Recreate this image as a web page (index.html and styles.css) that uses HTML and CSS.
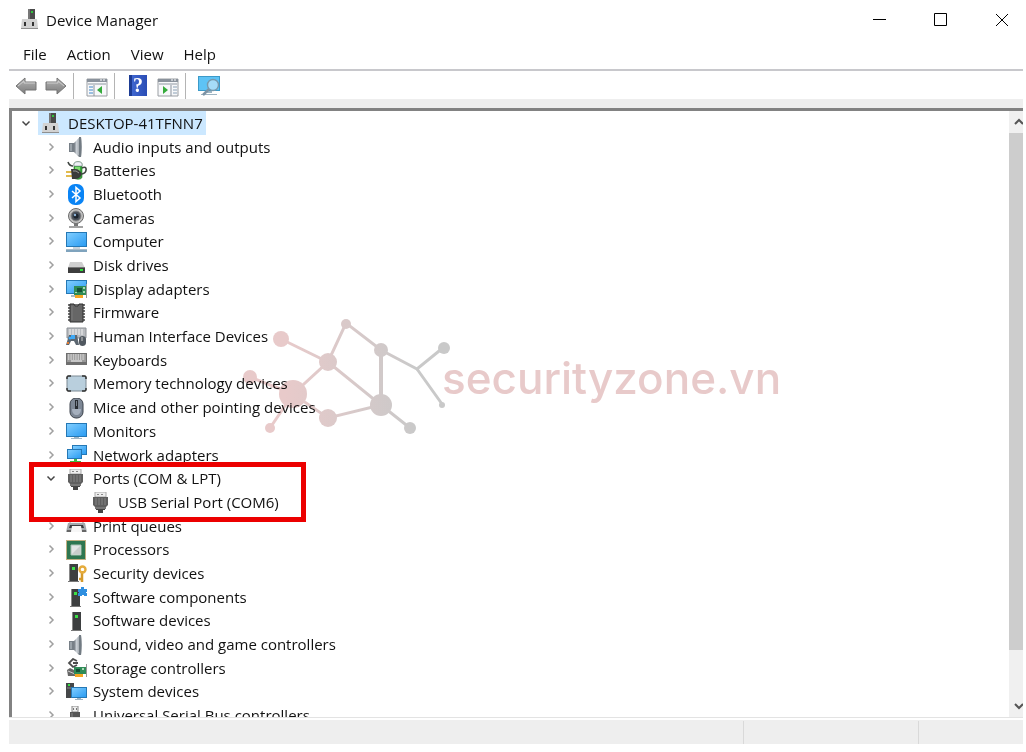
FILE: index.html
```html
<!DOCTYPE html>
<html lang="en">
<head>
    <meta charset="UTF-8">
    <title>Device Manager</title>
    <link rel="stylesheet" href="styles.css">
</head>
<body>

<!-- icon set, all drawn on a 21x21 grid -->
<svg class="sprite" aria-hidden="true">
    <defs>
        <linearGradient id="g-screen" x1="0" y1="0" x2="1" y2="1">
            <stop offset="0" stop-color="#7fcdff"/>
            <stop offset="1" stop-color="#2b9cf2"/>
        </linearGradient>
        <linearGradient id="g-steel" x1="0" y1="0" x2="1" y2="0">
            <stop offset="0" stop-color="#6d747c"/>
            <stop offset=".5" stop-color="#c9cfd5"/>
            <stop offset="1" stop-color="#80878e"/>
        </linearGradient>
        <linearGradient id="g-arrow" x1="0" y1="0" x2="0" y2="1">
            <stop offset="0" stop-color="#b5b5b5"/>
            <stop offset="1" stop-color="#7c7c7c"/>
        </linearGradient>
        <linearGradient id="g-node" gradientUnits="userSpaceOnUse" x1="45" y1="0" x2="175" y2="0">
            <stop offset="0" stop-color="#e8caca"/>
            <stop offset="1" stop-color="#c9c9c9"/>
        </linearGradient>
    </defs>
    <symbol id="i-pc" viewBox="0 0 21 21">
        <path d="M8 0h7v11H8z" fill="#4a4a4a"/>
        <path d="M8 0h2v11H8z" fill="#777"/>
        <path d="M11 2h2v2h-2z" fill="#2fc43c"/>
        <path d="M2 10h15l1 9v1H1v-1z" fill="#d2d2d2"/>
        <path d="M1 19h17v1H1z" fill="#8f8f8f"/>
        <path d="M4 13h2v4H4zM12 13h2v4h-2z" fill="#333"/>
    </symbol>
    <symbol id="i-audio" viewBox="0 0 21 21">
        <path d="M3 6h5v9H3z" fill="#777f87"/>
        <path d="M4 7h2v7H4z" fill="#9ba3aa"/>
        <path d="M8 6l5-5v19l-5-5z" fill="url(#g-steel)"/>
        <path d="M13 0h2c1 5 1 15 0 20h-2z" fill="#727b83"/>
        <path d="M12 2v16" stroke="#d0d5da" fill="none"/>
    </symbol>
    <symbol id="i-battery" viewBox="0 0 21 21">
        <path d="M8 3c0-3 8-3 8 0v13c0 3-8 3-8 0z" fill="#36a83a" stroke="#256b28" stroke-width=".6"/>
        <path d="M8 3c0-3 8-3 8 0v2H8z" fill="#eef1f6" stroke="#889" stroke-width=".6"/>
        <path d="M9 6h5v4H9z" fill="#7fdc70"/>
        <path d="M2 1c1 3 2 4 5 4M16 7c6-3 5 5 0 6" stroke="#3f4541" stroke-width="1.6" fill="none"/>
        <path d="M0 11h6M0 15h6" stroke="#d9a514" stroke-width="1.6"/>
        <path d="M5 8h4c3 0 6 2 7 5-1 3-4 5-7 5H6z" fill="#3b3b3b"/>
        <path d="M7 10h3l3 2" stroke="#999" fill="none"/>
    </symbol>
    <symbol id="i-bluetooth" viewBox="0 0 21 21">
        <rect x="2" y="0" width="16" height="21" rx="7" fill="#0a84f5"/>
        <path d="M6 7l8 7-4 3.500V3.500L14 7l-8 7" stroke="#fff" stroke-width="1.500" fill="none"/>
    </symbol>
    <symbol id="i-camera" viewBox="0 0 21 21">
        <circle cx="10" cy="8" r="7.500" fill="#c3c3c3" stroke="#6b6b6b"/>
        <circle cx="10" cy="8" r="5" fill="#4b525b" stroke="#888"/>
        <circle cx="10" cy="8" r="2.600" fill="#1c242e"/>
        <circle cx="9" cy="7" r="1.200" fill="#8fb4d8"/>
        <path d="M8 15h4v3H8z" fill="#777"/>
        <path d="M3 18h14v2H3z" fill="#a3a3a3"/>
    </symbol>
    <symbol id="i-computer" viewBox="0 0 21 21">
        <path d="M0 0h21v15H0z" fill="#2578b5"/>
        <path d="M1 1h19v13H1z" fill="url(#g-screen)"/>
        <path d="M7 15h7v2H7z" fill="#c8d3dc"/>
        <path d="M0 17h21v1H0z" fill="#a9bac6"/>
        <path d="M0 18h21v2H0z" fill="#7fa3bd"/>
    </symbol>
    <symbol id="i-disk" viewBox="0 0 21 21">
        <path d="M4 7h12l3 6H2z" fill="#cfcfcf"/>
        <path d="M2 12h17v6H2z" fill="#3d3d3d"/>
        <path d="M2 12h17v1H2z" fill="#777"/>
        <path d="M14 14h3v2h-3z" fill="#2fe03c"/>
    </symbol>
    <symbol id="i-display" viewBox="0 0 21 21">
        <path d="M0 1h21v14H0z" fill="#2578b5"/>
        <path d="M1 2h19v12H1z" fill="url(#g-screen)"/>
        <path d="M5 16h6v2H5z" fill="#a9bac6"/>
        <path d="M8 7h13v9H8z" fill="#2e8b57"/>
        <path d="M11 9h5v4h-5z" fill="#155237"/>
        <path d="M17 8h2v2h-2zM9 13h2v1H9zM17 12h2v2h-2z" fill="#a8d9b5"/>
        <path d="M9 16h8v3H9z" fill="#f5a623"/>
        <path d="M20 5h1v14h-1z" fill="#999"/>
    </symbol>
    <symbol id="i-firmware" viewBox="0 0 21 21">
        <path d="M2 2h17M2 5h17M2 8h17M2 11h17M2 14h17M2 17h17" stroke="#454545" stroke-width="1.600"/>
        <path d="M4 1h4c0 3 5 3 5 0h4v18H4z" fill="#666" stroke="#303030"/>
        <path d="M6 3v14" stroke="#7b7b7b"/>
    </symbol>
    <symbol id="i-hid" viewBox="0 0 21 21">
        <path d="M1 1h19v10H1z" fill="#b9bcc0" stroke="#8c9095"/>
        <path d="M3 3h15M3 5h15M3 7h15" stroke="#f2f2f2" stroke-dasharray="2 1"/>
        <path d="M3 8h8l2 10h-3l-2-4H5l-2 4H0z" fill="#5c6771"/>
        <circle cx="4" cy="11" r="1.500" fill="#3fa9f5"/>
        <path d="M5 8h4v4H5z" fill="#3fa9f5"/>
        <path d="M1 15h2v2H1z" fill="#e0782e"/>
        <path d="M13 12c0-4 7-4 7 0v4c0 4-7 4-7 0z" fill="#505860"/>
        <path d="M16 10v4" stroke="#ccc"/>
    </symbol>
    <symbol id="i-keyboard" viewBox="0 0 21 21">
        <path d="M0 3h21v12H0z" fill="#6f6f6f"/>
        <path d="M1 4h19v8H1z" fill="#9a9a9a"/>
        <path d="M2 5h17M2 7h17M2 9h17" stroke="#f4f4f4" stroke-dasharray="1.400 1"/>
        <path d="M5 11h11" stroke="#f4f4f4"/>
    </symbol>
    <symbol id="i-memory" viewBox="0 0 21 21">
        <rect x="1" y="2" width="19" height="15" rx="2" fill="#b9cfdd" stroke="#7c8a94"/>
        <path d="M1 5V3l1-1h3M16 2h3l1 1v2M20 14v2l-1 1h-3M5 17H2l-1-1v-2" stroke="#333" stroke-width="1.500" fill="none"/>
    </symbol>
    <symbol id="i-mouse" viewBox="0 0 21 21">
        <rect x="4" y="0" width="13" height="20" rx="6" fill="#7d8795" stroke="#3d434c"/>
        <path d="M6 11c0 8 9 8 9 0z" fill="#a5afbd"/>
        <rect x="9" y="2" width="3" height="9" fill="#272b31"/>
        <path d="M10.500 3v5" stroke="#78808c"/>
    </symbol>
    <symbol id="i-monitor" viewBox="0 0 21 21">
        <path d="M0 2h21v14H0z" fill="#2578b5"/>
        <path d="M1 3h19v12H1z" fill="url(#g-screen)"/>
        <path d="M8 16h5v1H8zM5 17h11v1H5z" fill="#9fb5c4"/>
    </symbol>
    <symbol id="i-network" viewBox="0 0 21 21">
        <path d="M6 0h15v10H6z" fill="#2578b5"/>
        <path d="M7 1h13v8H7z" fill="url(#g-screen)"/>
        <path d="M1 4h15v10H1z" fill="#2578b5"/>
        <path d="M2 5h13v8H2z" fill="url(#g-screen)"/>
        <path d="M8 14h3v2h4v3H4v-3h4z" fill="#3dba46"/>
    </symbol>
    <symbol id="i-port" viewBox="0 0 21 21">
        <path d="M4 0h11v5H4z" fill="#eee" stroke="#aaa"/>
        <path d="M6 2h2v1H6zM10 2h2v1h-2z" fill="#888"/>
        <path d="M2 5h15v8l-2 2H4l-2-2z" fill="#5f5f5f"/>
        <path d="M5 6v7M8 6v7M11 6v7M14 6v7" stroke="#858585"/>
        <path d="M4 15h11v2H4z" fill="#777"/>
        <path d="M5 17h2v1H5zM12 17h2v1h-2zM7 17h5v4H7z" fill="#444"/>
    </symbol>
    <symbol id="i-printer" viewBox="0 0 21 21">
        <path d="M4 2h13v6H4z" fill="#f2f2f2" stroke="#999"/>
        <path d="M2 7h17l2 9H0z" fill="#a5aaae"/>
        <path d="M4 9h13l1 3H3z" fill="#3c3f42"/>
        <path d="M6 10h9l1 6H5z" fill="#f7f7f7"/>
        <path d="M1 14h4v2H1zM16 14h4v2h-4z" fill="#666"/>
    </symbol>
    <symbol id="i-cpu" viewBox="0 0 21 21">
        <path d="M0 0h20v20H0z" fill="#f3e8c8"/>
        <rect x=".5" y=".5" width="19" height="19" fill="none" stroke="#8d763d" stroke-dasharray="1 1"/>
        <path d="M1 1h18v18H1z" fill="#2e7650"/>
        <path d="M5 5h10v10H5z" fill="#e3e5e4" stroke="#a9c2b3"/>
        <path d="M6 14l8-8v8z" fill="#c9cdcb"/>
    </symbol>
    <symbol id="i-security" viewBox="0 0 21 21">
        <path d="M3 1h9v18H3z" fill="#3d3f40"/>
        <path d="M3 1h1v18H3z" fill="#888"/>
        <path d="M6 4h3v3H6z" fill="#3be046"/>
        <path d="M2 18h11v1H2z" fill="#777"/>
        <path d="M16 8v11M16 16h-3" stroke="#d59a2b" stroke-width="2.500" fill="none"/>
        <circle cx="16.500" cy="6.500" r="3" fill="none" stroke="#e5ac3d" stroke-width="2.400"/>
    </symbol>
    <symbol id="i-component" viewBox="0 0 21 21">
        <path d="M5 2h9v17H5z" fill="#3d3f40"/>
        <path d="M5 2h1v17H5z" fill="#888"/>
        <path d="M8 5h3v3H8z" fill="#3be046"/>
        <path d="M4 19h11v1H4z" fill="#777"/>
        <path d="M12 2h3V0h3v2h3v3h-1v1h1v3h-3V8h-2v1h-4V6h1V5h-1z" fill="#2f8fe0"/>
    </symbol>
    <symbol id="i-software" viewBox="0 0 21 21">
        <path d="M6 1h9v18H6z" fill="#3d3f40"/>
        <path d="M6 1h1v18H6z" fill="#888"/>
        <path d="M9 4h3v3H9z" fill="#3be046"/>
        <path d="M5 19h11v1H5z" fill="#777"/>
    </symbol>
    <symbol id="i-storage" viewBox="0 0 21 21">
        <path d="M11 3L7 1 3 5l4 4 4-2M7 5h5" stroke="#4c4c4c" stroke-width="1.800" fill="none"/>
        <path d="M1 12l3-2 6 3v5H2z" fill="#666"/>
        <path d="M2 13l7 3" stroke="#ccc"/>
        <path d="M8 9h12v7H8z" fill="#2e8b57"/>
        <path d="M10 11h4v3h-4z" fill="#135034"/>
        <path d="M16 10h2v2h-2z" fill="#a8d9b5"/>
        <path d="M9 16h8v3H9z" fill="#f5a623"/>
        <path d="M20 6h1v13h-1z" fill="#999"/>
    </symbol>
    <symbol id="i-system" viewBox="0 0 21 21">
        <path d="M0 1h8v15H0z" fill="#454749"/>
        <path d="M2 2h2v2H2z" fill="#3be046"/>
        <path d="M1 6h5" stroke="#888"/>
        <path d="M5 5h16v11H5z" fill="#2578b5"/>
        <path d="M6 6h14v9H6z" fill="url(#g-screen)"/>
        <path d="M11 16h4v1h-4zM9 17h8v1H9z" fill="#9fb5c4"/>
    </symbol>
    <symbol id="i-usb" viewBox="0 0 21 21">
        <path d="M6 0h6v6H6z" fill="#eee" stroke="#888"/>
        <path d="M7 2h1v2H7zM10 2h1v2h-1z" fill="#777"/>
        <path d="M4 6h10v15H4z" fill="#555"/>
        <path d="M6 7v13" stroke="#888"/>
    </symbol>
    <symbol id="i-right" viewBox="0 0 12 12">
        <path d="M4.500 2.500L8 6 4.500 9.500" fill="none" stroke="#a0a0a0" stroke-width="1.500"/>
    </symbol>
    <symbol id="i-down" viewBox="0 0 12 12">
        <path d="M2.500 4.500L6 8l3.500-3.500" fill="none" stroke="#454545" stroke-width="1.500"/>
    </symbol>
    <symbol id="i-up" viewBox="0 0 12 12">
        <path d="M2 8l4-4 4 4" fill="none" stroke="#555" stroke-width="2"/>
    </symbol>
    <symbol id="i-arrow" viewBox="0 0 22 22">
        <path d="M1 11l9-8v4h11v8H10v4z" fill="url(#g-arrow)" stroke="#757575"/>
        <path d="M3 11l6-5v2h11" fill="none" stroke="#cfcfcf"/>
    </symbol>
    <symbol id="i-pane" viewBox="0 0 22 22">
        <path d="M1 4h20v17H1z" fill="#f7f8fa" stroke="#9a9ea3"/>
        <path d="M1 4h20v3H1z" fill="#8a929c"/>
        <path d="M2 8h18v2H2z" fill="#c3c8ce"/>
        <path d="M14 5h2M17 5h2" stroke="#fff"/>
        <path d="M8 10v11" stroke="#8a929c"/>
        <path d="M3 12h4M3 15h4M3 18h4" stroke="#3e86c8"/>
        <path d="M16 11v8l-5-4z" fill="#35ab3b"/>
    </symbol>
    <symbol id="i-pane-right" viewBox="0 0 22 22">
        <path d="M1 4h20v17H1z" fill="#f7f8fa" stroke="#9a9ea3"/>
        <path d="M1 4h20v3H1z" fill="#8a929c"/>
        <path d="M2 8h18v2H2z" fill="#c3c8ce"/>
        <path d="M14 5h2M17 5h2" stroke="#fff"/>
        <path d="M14 10v11" stroke="#8a929c"/>
        <path d="M16 12h4M16 15h4M16 18h4" stroke="#8aa0b5"/>
        <path d="M6 11v8l5-4z" fill="#35ab3b"/>
    </symbol>
    <symbol id="i-scan" viewBox="0 0 22 22">
        <path d="M0 1h22v15H0z" fill="#3b9ac9"/>
        <path d="M1 2h20v13H1z" fill="#5ec3f5"/>
        <path d="M8 16h6v2H8zM3 19h16v1H3z" fill="#9eb4c2"/>
        <path d="M11 14l-6 6" stroke="#7d93a5" stroke-width="2.500"/>
        <circle cx="15" cy="10" r="5.500" fill="#a6dcf8" stroke="#7898ac" stroke-width="1.400"/>
    </symbol>
</svg>

<header class="titlebar">
    <svg class="icon"><use href="#i-pc"/></svg>
    <h1 class="title">Device Manager</h1>
    <div class="window-buttons">
        <button type="button" aria-label="Minimize"><svg viewBox="0 0 14 14"><path d="M0 6.500h13"/></svg></button>
        <button type="button" aria-label="Maximize"><svg viewBox="0 0 14 14"><path d="M.5.500h12v12H.5z"/></svg></button>
        <button type="button" aria-label="Close"><svg viewBox="0 0 14 14"><path d="M1 1l12 12M13 1L1 13"/></svg></button>
    </div>
</header>

<nav class="menubar">
    <button type="button">File</button>
    <button type="button">Action</button>
    <button type="button">View</button>
    <button type="button">Help</button>
</nav>

<div class="toolbar">
    <div class="tool-group">
        <button type="button" aria-label="Back"><svg><use href="#i-arrow"/></svg></button>
        <button type="button" aria-label="Forward" class="flip"><svg><use href="#i-arrow"/></svg></button>
    </div>
    <div class="tool-group">
        <button type="button" aria-label="Show console tree"><svg><use href="#i-pane"/></svg></button>
    </div>
    <div class="tool-group">
        <button type="button" aria-label="Help" class="help"><span>?</span></button>
        <button type="button" aria-label="Show action pane"><svg><use href="#i-pane-right"/></svg></button>
    </div>
    <div class="tool-group">
        <button type="button" aria-label="Scan for hardware changes"><svg><use href="#i-scan"/></svg></button>
    </div>
</div>

<main class="pane">
    <ul class="tree" role="tree">
        <li class="row root" role="treeitem"><button type="button" class="toggle" aria-label="Collapse"><svg><use href="#i-down"/></svg></button><span class="item selected"><svg class="icon"><use href="#i-pc"/></svg>DESKTOP-41TFNN7</span></li>
        <li class="row" role="treeitem"><button type="button" class="toggle" aria-label="Expand"><svg><use href="#i-right"/></svg></button><span class="item"><svg class="icon"><use href="#i-audio"/></svg>Audio inputs and outputs</span></li>
        <li class="row" role="treeitem"><button type="button" class="toggle" aria-label="Expand"><svg><use href="#i-right"/></svg></button><span class="item"><svg class="icon"><use href="#i-battery"/></svg>Batteries</span></li>
        <li class="row" role="treeitem"><button type="button" class="toggle" aria-label="Expand"><svg><use href="#i-right"/></svg></button><span class="item"><svg class="icon"><use href="#i-bluetooth"/></svg>Bluetooth</span></li>
        <li class="row" role="treeitem"><button type="button" class="toggle" aria-label="Expand"><svg><use href="#i-right"/></svg></button><span class="item"><svg class="icon"><use href="#i-camera"/></svg>Cameras</span></li>
        <li class="row" role="treeitem"><button type="button" class="toggle" aria-label="Expand"><svg><use href="#i-right"/></svg></button><span class="item"><svg class="icon"><use href="#i-computer"/></svg>Computer</span></li>
        <li class="row" role="treeitem"><button type="button" class="toggle" aria-label="Expand"><svg><use href="#i-right"/></svg></button><span class="item"><svg class="icon"><use href="#i-disk"/></svg>Disk drives</span></li>
        <li class="row" role="treeitem"><button type="button" class="toggle" aria-label="Expand"><svg><use href="#i-right"/></svg></button><span class="item"><svg class="icon"><use href="#i-display"/></svg>Display adapters</span></li>
        <li class="row" role="treeitem"><button type="button" class="toggle" aria-label="Expand"><svg><use href="#i-right"/></svg></button><span class="item"><svg class="icon"><use href="#i-firmware"/></svg>Firmware</span></li>
        <li class="row" role="treeitem"><button type="button" class="toggle" aria-label="Expand"><svg><use href="#i-right"/></svg></button><span class="item"><svg class="icon"><use href="#i-hid"/></svg>Human Interface Devices</span></li>
        <li class="row" role="treeitem"><button type="button" class="toggle" aria-label="Expand"><svg><use href="#i-right"/></svg></button><span class="item"><svg class="icon"><use href="#i-keyboard"/></svg>Keyboards</span></li>
        <li class="row" role="treeitem"><button type="button" class="toggle" aria-label="Expand"><svg><use href="#i-right"/></svg></button><span class="item"><svg class="icon"><use href="#i-memory"/></svg>Memory technology devices</span></li>
        <li class="row" role="treeitem"><button type="button" class="toggle" aria-label="Expand"><svg><use href="#i-right"/></svg></button><span class="item"><svg class="icon"><use href="#i-mouse"/></svg>Mice and other pointing devices</span></li>
        <li class="row" role="treeitem"><button type="button" class="toggle" aria-label="Expand"><svg><use href="#i-right"/></svg></button><span class="item"><svg class="icon"><use href="#i-monitor"/></svg>Monitors</span></li>
        <li class="row" role="treeitem"><button type="button" class="toggle" aria-label="Expand"><svg><use href="#i-right"/></svg></button><span class="item"><svg class="icon"><use href="#i-network"/></svg>Network adapters</span></li>
        <li class="row" role="treeitem"><button type="button" class="toggle" aria-label="Collapse"><svg><use href="#i-down"/></svg></button><span class="item"><svg class="icon"><use href="#i-port"/></svg>Ports (COM &amp; LPT)</span></li>
        <li class="row child" role="treeitem"><span class="item"><svg class="icon"><use href="#i-port"/></svg>USB Serial Port (COM6)</span></li>
        <li class="row" role="treeitem"><button type="button" class="toggle" aria-label="Expand"><svg><use href="#i-right"/></svg></button><span class="item"><svg class="icon"><use href="#i-printer"/></svg>Print queues</span></li>
        <li class="row" role="treeitem"><button type="button" class="toggle" aria-label="Expand"><svg><use href="#i-right"/></svg></button><span class="item"><svg class="icon"><use href="#i-cpu"/></svg>Processors</span></li>
        <li class="row" role="treeitem"><button type="button" class="toggle" aria-label="Expand"><svg><use href="#i-right"/></svg></button><span class="item"><svg class="icon"><use href="#i-security"/></svg>Security devices</span></li>
        <li class="row" role="treeitem"><button type="button" class="toggle" aria-label="Expand"><svg><use href="#i-right"/></svg></button><span class="item"><svg class="icon"><use href="#i-component"/></svg>Software components</span></li>
        <li class="row" role="treeitem"><button type="button" class="toggle" aria-label="Expand"><svg><use href="#i-right"/></svg></button><span class="item"><svg class="icon"><use href="#i-software"/></svg>Software devices</span></li>
        <li class="row" role="treeitem"><button type="button" class="toggle" aria-label="Expand"><svg><use href="#i-right"/></svg></button><span class="item"><svg class="icon"><use href="#i-audio"/></svg>Sound, video and game controllers</span></li>
        <li class="row" role="treeitem"><button type="button" class="toggle" aria-label="Expand"><svg><use href="#i-right"/></svg></button><span class="item"><svg class="icon"><use href="#i-storage"/></svg>Storage controllers</span></li>
        <li class="row" role="treeitem"><button type="button" class="toggle" aria-label="Expand"><svg><use href="#i-right"/></svg></button><span class="item"><svg class="icon"><use href="#i-system"/></svg>System devices</span></li>
        <li class="row" role="treeitem"><button type="button" class="toggle" aria-label="Expand"><svg><use href="#i-right"/></svg></button><span class="item"><svg class="icon"><use href="#i-usb"/></svg>Universal Serial Bus controllers</span></li>
    </ul>

    <div class="scrollbar">
        <button type="button" aria-label="Scroll up"><svg><use href="#i-up"/></svg></button>
        <div class="track"><div class="thumb"></div></div>
        <button type="button" aria-label="Scroll down" class="flip-y"><svg><use href="#i-up"/></svg></button>
    </div>

    <div class="highlight"></div>

    <div class="watermark">
        <svg viewBox="0 0 210 120">
            <g stroke="url(#g-node)" stroke-width="3" fill="none">
                <path d="M41 21l47 23 18-39 35 27 36 19 27-22"/>
                <path d="M10 59l43 17 35-32 53 43-53 13-35-24-23 34"/>
                <path d="M141 87l29 23M177 51l25 35"/>
                <path d="M139 32h4v55h-4z" fill="url(#g-node)" stroke="none"/>
            </g>
            <g fill="url(#g-node)">
                <circle cx="41" cy="21" r="8"/>
                <circle cx="106" cy="6" r="5"/>
                <circle cx="88" cy="44" r="9"/>
                <circle cx="141" cy="32" r="7"/>
                <circle cx="204" cy="30" r="6"/>
                <circle cx="10" cy="59" r="7"/>
                <circle cx="53" cy="76" r="14"/>
                <circle cx="141" cy="87" r="11"/>
                <circle cx="88" cy="100" r="9"/>
                <circle cx="30" cy="110" r="5"/>
                <circle cx="170" cy="110" r="6"/>
                <circle cx="202" cy="87" r="3"/>
            </g>
        </svg>
        <span>securityzone.vn</span>
    </div>
</main>

<footer class="statusbar">
    <div class="status-main"></div>
    <div class="status-cell"></div>
    <div class="status-end"></div>
</footer>

</body>
</html>
```

FILE: styles.css
```css
* {
    box-sizing: border-box;
}

body {
    display: flex;
    flex-direction: column;
    height: 100vh;
    margin: 0;
    padding: 0 3px 8px 9px;
    background-color: #fff;
    color: #111;
    font-family: "Open Sans", "Noto Sans", sans-serif;
    font-size: 15px;
    line-height: 20px;
}

button {
    padding: 0;
    border: none;
    background: none;
    color: inherit;
    font: inherit;
}

.sprite {
    position: absolute;
    width: 0;
    height: 0;
}

.icon {
    flex: none;
    width: 21px;
    height: 21px;
}

/* title bar */
.titlebar {
    display: flex;
    align-items: center;
    gap: 5px;
    height: 39px;
    padding-left: 11px;
}

.title {
    flex: 1;
    margin: 0;
    font-size: 15px;
    font-weight: 400;
}

.window-buttons {
    display: flex;
    gap: 19px;
}

.window-buttons button {
    display: flex;
    align-items: center;
    justify-content: center;
    width: 42px;
    height: 40px;
}

.window-buttons svg {
    width: 14px;
    height: 14px;
    fill: none;
    stroke: #000;
}

/* menu */
.menubar {
    display: flex;
    gap: 20px;
    height: 32px;
    padding-left: 14px;
    border-bottom: 2px solid #c8c8cc;
}

/* toolbar */
.toolbar {
    display: flex;
    height: 37px;
    border-bottom: 9px solid #eee;
    padding-top: 2px;
}

.tool-group {
    display: flex;
    align-items: center;
    gap: 8px;
    padding: 0 6px 0 12px;
    border-right: 1px solid #b4b4b4;
}

.tool-group:first-child {
    padding-left: 6px;
}

.tool-group:last-child {
    border-right: none;
}

.tool-group button {
    display: flex;
    width: 22px;
    height: 22px;
}

.tool-group svg {
    width: 22px;
    height: 22px;
}

.flip {
    transform: scaleX(-1);
}

.flip-y {
    transform: scaleY(-1);
}

.tool-group .help {
    justify-content: center;
}

.help span {
    width: 18px;
    height: 21px;
    background: linear-gradient(90deg, #1d3c94 3px, #3f66cf 3px, #2a4db5);
    color: #fff;
    font-family: "Liberation Serif", serif;
    font-size: 20px;
    font-weight: 700;
    line-height: 21px;
    text-align: center;
}

/* device tree */
.pane {
    position: relative;
    display: flex;
    flex: 1;
    min-height: 0;
    overflow: hidden;
    border-top: 3px solid #828282;
    border-left: 3px solid #828282;
}

.tree {
    display: grid;
    flex: 1;
    grid-auto-rows: 1fr;
    height: 616px;
    margin: 0;
    padding: 0;
    list-style: none;
}

.row {
    display: flex;
    align-items: center;
    min-height: 0;
    padding-left: 27px;
}

.root {
    padding-left: 2px;
}

.child {
    padding-left: 76px;
}

.toggle {
    display: flex;
    justify-content: center;
    width: 24px;
}

.toggle svg {
    width: 12px;
    height: 12px;
}

.item {
    display: flex;
    align-items: center;
    gap: 6px;
    height: 100%;
    padding: 0 3px;
    white-space: nowrap;
}

.item .icon {
    margin-top: 2px;
}

.selected {
    background-color: #cce8ff;
}

.scrollbar {
    display: flex;
    flex-direction: column;
    width: 14px;
    overflow: hidden;
    background-color: #f0f0f0;
}

.scrollbar button {
    display: flex;
    align-items: center;
    justify-content: flex-end;
    width: 16px;
    height: 22px;
}

.scrollbar svg {
    width: 12px;
    height: 12px;
}

.track {
    flex: 1;
}

.thumb {
    height: 92%;
    background-color: #cdcdcd;
}

/* marks the serial port entry */
.highlight {
    position: absolute;
    top: 351px;
    left: 17px;
    width: 277px;
    height: 60px;
    border: 5px solid #ec0000;
}

.watermark {
    position: absolute;
    top: 207px;
    left: 228px;
    display: flex;
    align-items: center;
    color: #e8caca;
    font-family: Inter, sans-serif;
    font-size: 44px;
    font-weight: 500;
    line-height: 48px;
    mix-blend-mode: multiply;
    pointer-events: none;
}

.watermark svg {
    width: 210px;
    height: 120px;
    margin-right: -8px;
}

/* status bar */
.statusbar {
    display: flex;
    height: 27px;
    padding-top: 3px;
    border-top: 1px solid #e3e3e3;
    background: linear-gradient(#fff 2px, #eee 2px);
}

.status-main {
    flex: 1;
}

.status-cell {
    width: 176px;
    border-left: 1px solid #d9d9d9;
    border-right: 1px solid #d9d9d9;
}

.status-end {
    width: 104px;
}
```
